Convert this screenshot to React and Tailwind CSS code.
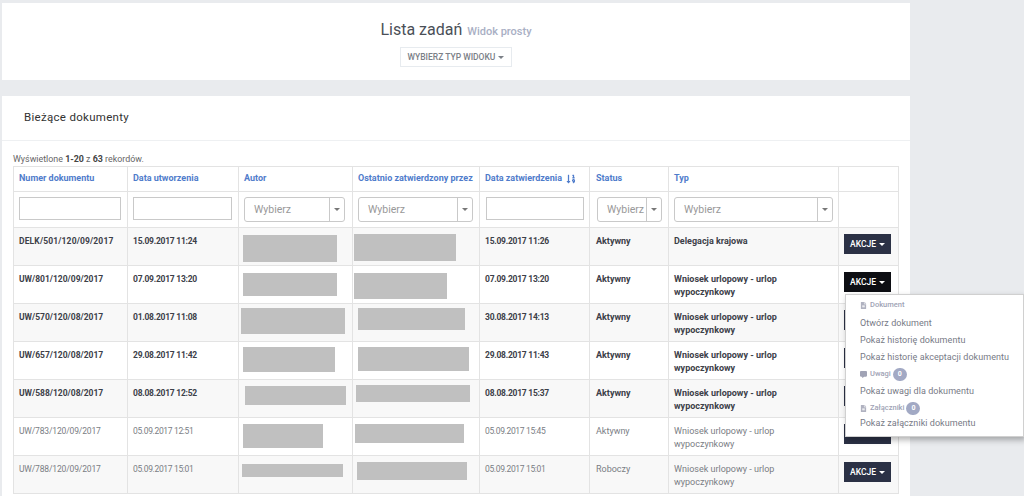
import React from "react";
import { FaFileAlt, FaCommentAlt, FaSortNumericDown } from "react-icons/fa";

const font = { fontFamily: 'Roboto, "Noto Sans", sans-serif' };

const rows = [
  { n: "DELK/501/120/09/2017", c: "15.09.2017 11:24", a: [243, 94, 7, 27], o: [354, 102, 6, 27], d: "15.09.2017 11:26", s: "Aktywny", t: "Delegacja krajowa", b: true },
  { n: "UW/801/120/09/2017", c: "07.09.2017 13:20", a: [243, 94, 7, 23], o: [354, 93, 7, 26], d: "07.09.2017 13:20", s: "Aktywny", t: "Wniosek urlopowy - urlop wypoczynkowy", b: true, open: true },
  { n: "UW/570/120/08/2017", c: "01.08.2017 11:08", a: [241, 104, 4, 26], o: [358, 107, 4, 22], d: "30.08.2017 14:13", s: "Aktywny", t: "Wniosek urlopowy - urlop wypoczynkowy", b: true },
  { n: "UW/657/120/08/2017", c: "29.08.2017 11:42", a: [243, 92, 5, 25], o: [358, 111, 5, 24], d: "29.08.2017 11:43", s: "Aktywny", t: "Wniosek urlopowy - urlop wypoczynkowy", b: true },
  { n: "UW/588/120/08/2017", c: "08.08.2017 12:52", a: [245, 101, 6, 19], o: [356, 114, 5, 17], d: "08.08.2017 15:37", s: "Aktywny", t: "Wniosek urlopowy - urlop wypoczynkowy", b: true },
  { n: "UW/783/120/09/2017", c: "05.09.2017 12:51", a: [243, 80, 6, 24], o: [355, 109, 6, 19], d: "05.09.2017 15:45", s: "Aktywny", t: "Wniosek urlopowy - urlop wypoczynkowy", b: false },
  { n: "UW/788/120/09/2017", c: "05.09.2017 15:01", a: [242, 101, 8, 13], o: [357, 110, 6, 18], d: "05.09.2017 15:01", s: "Roboczy", t: "Wniosek urlopowy - urlop wypoczynkowy", b: false },
];

const headers = ["Numer dokumentu", "Data utworzenia", "Autor", "Ostatnio zatwierdzony przez", "Data zatwierdzenia", "Status", "Typ", ""];

function Caret({ className }) {
  return <span className={"inline-block w-0 h-0 border-x-[3px] border-x-transparent border-t-[3px] " + className} />;
}

function TextFilter({ w, ml = 0 }) {
  return <div style={{ width: w, marginLeft: ml }} className="h-[23px] mt-[5px] border border-[#c9c9c9] bg-white" />;
}

function SelectFilter({ w, ml = 0 }) {
  return (
    <div style={{ width: w, marginLeft: ml }} className="h-[25px] mt-[5px] flex items-stretch border border-[#c9c9c9] rounded-[3px] bg-white">
      <div className="flex-1 min-w-0 flex items-center pl-[9px] text-[10.5px] text-[#999] overflow-hidden">Wybierz</div>
      <div className="w-[15px] shrink-0 border-l border-[#c9c9c9] flex items-center justify-center">
        <Caret className="border-t-[#777]" />
      </div>
    </div>
  );
}

function Redact({ box, left }) {
  const [x, w, y, h] = box;
  return <div style={{ marginLeft: x - left, width: w, height: h, marginTop: y }} className="bg-[#c0c0c0]" />;
}

function Menu() {
  const head = "flex items-center gap-[3px] pl-[14px] text-[7.5px] font-medium text-[#a0a3b5] h-[14px]";
  const item = "pl-[14px] text-[9px] text-[#777a86] h-[17px] flex items-center tracking-[0.05px] whitespace-nowrap";
  const badge = "-ml-[1px] w-[14px] h-[13px] rounded-full bg-[#a2a9c4] text-white text-[7px] font-bold flex items-center justify-center";
  return (
    <div className="absolute left-[845px] top-[294px] w-[179px] h-[143px] bg-white border border-[#d0d0d0] shadow-[2px_3px_6px_rgba(0,0,0,0.3)] pt-[3px] z-10" style={font}>
      <div className={head}><FaFileAlt className="text-[7px] text-[#b0b2c0]" />Dokument</div>
      <div className={item + " mt-[3px]"}>Otwórz dokument</div>
      <div className={item}>Pokaż historię dokumentu</div>
      <div className={item}>Pokaż historię akceptacji dokumentu</div>
      <div className={head + " mt-[1px]"}><FaCommentAlt className="text-[7px] text-[#a0a3b5]" />Uwagi<span className={badge}>0</span></div>
      <div className={item + " mt-[2px]"}>Pokaż uwagi dla dokumentu</div>
      <div className={head + " mt-[1px]"}><FaFileAlt className="text-[7px] text-[#b0b2c0]" />Załączniki<span className={badge}>0</span></div>
      <div className={item}>Pokaż załączniki dokumentu</div>
    </div>
  );
}

export default function App() {
  const cell = "border border-[#e3e3e3] align-top px-[5px] pt-[6.5px] leading-[13px] h-[38px]";
  return (
    <div className="relative w-[1024px] h-[496px] overflow-hidden bg-[#e9ebee] pt-[3px] pl-[2px]" style={font}>
      <div className="w-[908px] h-[77px] bg-white flex flex-col items-center">
        <div className="mt-[15px] flex items-baseline gap-[5px]">
          <span className="text-[16px] text-[#4a4f57]">Lista zadań</span>
          <span className="text-[11px] font-medium text-[#a9afc4]">Widok prosty</span>
        </div>
        <div className="mt-[5px] h-[20px] w-[112px] border border-[#e7ebef] flex items-center justify-center gap-[3px] text-[8.5px] text-[#7b8087] font-medium">
          WYBIERZ TYP WIDOKU <Caret className="border-t-[#7b8087]" />
        </div>
      </div>

      <div className="mt-[16px] w-[908px] h-[400px] bg-white">
        <div className="h-[45px] border-b border-[#eef0f2] pl-[22px] flex items-center text-[11.5px] text-[#333] tracking-[0.3px]">Bieżące dokumenty</div>
        <div className="pl-[11px] pt-[12px]">
          <div className="text-[8.9px] leading-[12px] text-[#666] h-[13px]">Wyświetlone <b className="text-[#444]">1-20</b> z <b className="text-[#444]">63</b> rekordów.</div>
          <table className="table-fixed border-collapse w-[885px]">
            <colgroup>
              {[114, 111, 114, 127, 110, 79, 170, 60].map((w, i) => <col key={i} style={{ width: w }} />)}
            </colgroup>
            <thead>
              <tr className="h-[25px]">
                {headers.map((h, i) => (
                  <th key={i} className={"border border-[#e3e3e3] text-left text-[9px] font-bold text-[#4f7ccb] whitespace-nowrap pr-[5px] " + (i === 5 ? "pl-[6px]" : "pl-[5px]")}>
                    <span className="flex items-center gap-[4px]">{h}{i === 4 && <FaSortNumericDown className="text-[10px]" />}</span>
                  </th>
                ))}
              </tr>
              <tr className="h-[36px]">
                <td className="border border-[#e3e3e3] align-top px-[5px]"><TextFilter w={102} /></td>
                <td className="border border-[#e3e3e3] align-top px-[5px]"><TextFilter w={99} /></td>
                <td className="border border-[#e3e3e3] align-top px-[5px]"><SelectFilter w={101} /></td>
                <td className="border border-[#e3e3e3] align-top px-[5px]"><SelectFilter w={115} /></td>
                <td className="border border-[#e3e3e3] align-top px-[5px]"><TextFilter w={98} ml={1} /></td>
                <td className="border border-[#e3e3e3] align-top pl-[5px]"><SelectFilter w={65} ml={2} /></td>
                <td className="border border-[#e3e3e3] align-top px-[5px]"><SelectFilter w={159} /></td>
                <td className="border border-[#e3e3e3]" />
              </tr>
            </thead>
            <tbody>
              {rows.map((r, i) => {
                const num = r.b ? (i === 0 ? "text-[8.5px] font-bold text-[#3c4048] tracking-[0.15px]" : "text-[8.5px] font-bold text-[#3c4048]") : "text-[8.5px] text-[#7a7d84] tracking-[-0.15px]";
                const date = r.b ? "text-[8.5px] font-bold text-[#3c4048] tracking-[-0.25px]" : "text-[8.5px] text-[#7a7d84] tracking-[-0.35px]";
                const text = r.b ? "text-[9px] font-bold text-[#3c4048]" : "text-[9px] text-[#7a7d84]";
                return (
                  <tr key={i} className={i % 2 === 0 ? "bg-[#f8f8f8]" : "bg-white"}>
                    <td className={cell + " whitespace-nowrap " + num}>{r.n}</td>
                    <td className={cell + " whitespace-nowrap " + date}>{r.c}</td>
                    <td className="border border-[#e3e3e3] align-top h-[38px] p-0"><Redact box={r.a} left={239} /></td>
                    <td className="border border-[#e3e3e3] align-top h-[38px] p-0"><Redact box={r.o} left={353} /></td>
                    <td className={cell + " whitespace-nowrap " + date}>{r.d}</td>
                    <td className={cell + " pl-[6px] " + text}>{r.s}</td>
                    <td className={cell + " " + text}><div className="w-[125px]">{r.t}</div></td>
                    <td className="border border-[#e3e3e3] align-top h-[38px] pl-[5px] pt-[6px]">
                      <div className={"w-[47px] h-[20px] flex items-center justify-center gap-[3px] text-[8.5px] font-medium text-white " + (r.open ? "bg-[#0d0e13]" : "bg-[#2b3145]")}>
                        AKCJE <Caret className="border-t-white" />
                      </div>
                    </td>
                  </tr>
                );
              })}
            </tbody>
          </table>
        </div>
      </div>
      <Menu />
    </div>
  );
}
